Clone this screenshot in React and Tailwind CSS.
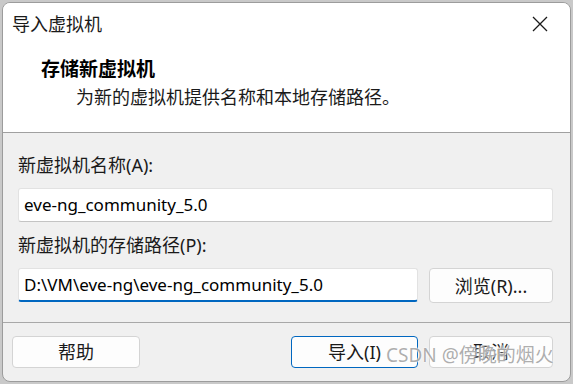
const ui = { fontFamily: '"Noto Sans", "Noto Sans CJK SC", sans-serif' };

function Btn({ children, primary, className = "" }) {
  return (
    <button
      className={
        "h-[32px] rounded-[4px] bg-[#fdfdfd] text-[18px] leading-none text-[#1a1a1a] flex items-center justify-center " +
        (primary ? "border border-[#0067c0] " : "border border-[#d4d4d4] ") +
        className
      }
      style={ui}
    >
      {children}
    </button>
  );
}

export default function App() {
  return (
    <div className="w-[573px] h-[384px] bg-[#c9c9c9] p-[2px] overflow-hidden" style={ui}>
      <div className="relative w-full h-full rounded-[8px] border border-[#9c9c9c] bg-[#f0f0f0] overflow-hidden flex flex-col">
        {/* title bar */}
        <div className="h-[41px] bg-white flex items-center justify-between pl-[9px] pr-[10px]">
          <span className="text-[18px] text-[#1a1a1a] leading-none">导入虚拟机</span>
          <svg width="40" height="30" viewBox="0 0 40 30">
            <path d="M13 8 L27 22 M27 8 L13 22" stroke="#1a1a1a" strokeWidth="1.3" fill="none" />
          </svg>
        </div>

        {/* header */}
        <div className="bg-white pt-[13px] pb-[23px] border-b border-[#a0a0a0]">
          <div className="pl-[38px] text-[19px] leading-[24px] font-bold text-black">存储新虚拟机</div>
          <div className="pl-[73px] mt-[4px] text-[18px] leading-[24px] text-[#1a1a1a]">
            为新的虚拟机提供名称和本地存储路径。
          </div>
        </div>

        {/* body */}
        <div className="pl-[15px] pr-[17px] pt-[20px]">
          <div className="text-[18px] leading-[24px] text-[#1a1a1a]">新虚拟机名称(A):</div>
          <div className="mt-[11px] h-[34px] bg-white border border-[#e2e2e2] border-b-[#c4c4c4] rounded-[3px] flex items-center pl-[5px] text-[17px] text-black">
            eve-ng_community_5.0
          </div>
          <div className="mt-[11px] text-[18px] leading-[24px] text-[#1a1a1a]">新虚拟机的存储路径(P):</div>
          <div className="mt-[11px] flex gap-[11px]">
            <div className="w-[400px] h-[34px] bg-white border border-[#e2e2e2] border-b-2 border-b-[#0067c0] rounded-[3px] flex items-center pl-[5px] text-[17px] text-black">
              D:\VM\eve-ng\eve-ng_community_5.0
            </div>
            <Btn className="w-[124px] h-[35px]">浏览(R)...</Btn>
          </div>
        </div>

        <div className="mt-[19px] border-t border-[#a8a8a8]" />

        {/* buttons */}
        <div className="mt-[13px] pl-[9px] pr-[17px] flex items-center">
          <Btn className="w-[128px]">帮助</Btn>
          <div className="flex-1" />
          <Btn primary className="w-[127px]">导入(I)</Btn>
          <Btn className="w-[124px] ml-[11px]">取消</Btn>
        </div>

        {/* watermark */}
        <div
          className="absolute left-[383px] top-[338px] text-[19px] leading-[28px] text-[#8a8a8a]/70 whitespace-nowrap"
          style={{ ...ui, textShadow: "0 0 2px #ffffff, 0 0 2px #ffffff" }}
        >
          CSDN @傍晚的烟火
        </div>
      </div>
    </div>
  );
}
